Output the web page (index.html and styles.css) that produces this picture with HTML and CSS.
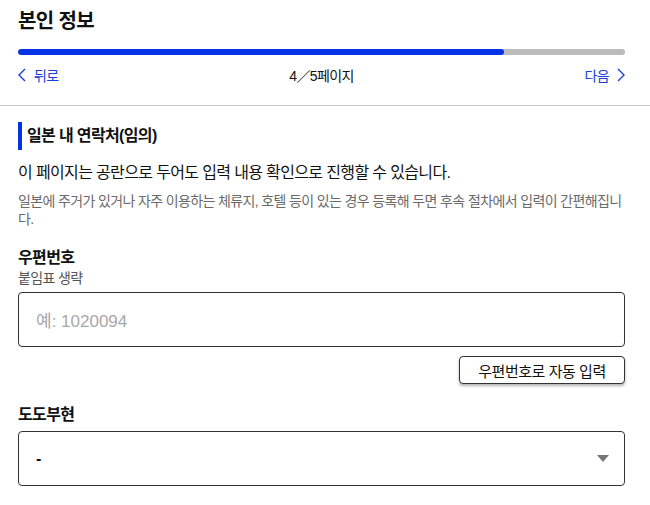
FILE: index.html
```html
<!DOCTYPE html>
<html lang="ko">
<head>
<meta charset="utf-8">
<link rel="stylesheet" href="styles.css">
</head>
<body>
<header class="header">
  <h1 class="title">본인 정보</h1>
  <div class="progress"><div class="progress-fill" style="width:80%"></div></div>
  <nav class="nav">
    <a class="nav-link"><svg class="chev" viewBox="0 0 8 14" width="8" height="14"><path d="M7 1 L1 7 L7 13" fill="none" stroke="currentColor" stroke-width="1.4"/></svg><span>뒤로</span></a>
    <span class="page">4／5페이지</span>
    <a class="nav-link"><span>다음</span><svg class="chev" viewBox="0 0 8 14" width="8" height="14"><path d="M1 1 L7 7 L1 13" fill="none" stroke="currentColor" stroke-width="1.4"/></svg></a>
  </nav>
</header>
<main class="main">
  <h2 class="section-title">일본 내 연락처(임의)</h2>
  <p class="lead">이 페이지는 공란으로 두어도 입력 내용 확인으로 진행할 수 있습니다.</p>
  <p class="note">일본에 주거가 있거나 자주 이용하는 체류지, 호텔 등이 있는 경우 등록해 두면 후속 절차에서 입력이 간편해집니다.</p>

  <div class="field">
    <div class="label">우편번호</div>
    <div class="hint">붙임표 생략</div>
    <div class="input"><span class="placeholder">예: 1020094</span></div>
    <div class="btn-row"><button class="btn">우편번호로 자동 입력</button></div>
  </div>

  <div class="field field-pref">
    <div class="label">도도부현</div>
    <div class="input select"><span class="value">-</span><span class="caret"></span></div>
  </div>
</main>
</body>
</html>
```

FILE: styles.css
```css
* { box-sizing: border-box; }
body {
  margin: 0;
  background: #fff;
  color: #111;
  font-family: "Liberation Sans", "Noto Sans CJK KR", sans-serif;
  letter-spacing: -0.04em;
}
.header {
  padding: 7px 25px 0 18px;
  border-bottom: 1px solid #c8c8c8;
}
.title {
  margin: 0;
  font-size: 20px;
  line-height: 28px;
  font-weight: 700;
}
.progress {
  margin-top: 14px;
  height: 6px;
  border-radius: 3px;
  background: #bcbcbc;
  overflow: hidden;
}
.progress-fill {
  height: 100%;
  background: #0433e6;
  border-radius: 3px;
}
.nav {
  margin-top: 10px;
  height: 20px;
  margin-bottom: 20px;
  display: flex;
  justify-content: space-between;
  align-items: center;
  font-size: 14px;
}
.nav-link {
  color: #1b3fd8;
  display: flex;
  align-items: center;
  gap: 8px;
}
.page {
  color: #111;
}
.main {
  padding: 16px 25px 0 18px;
}
.section-title {
  margin: 0;
  border-left: 4px solid #0433e6;
  padding-left: 5px;
  font-size: 16px;
  line-height: 28px;
  font-weight: 700;
}
.lead {
  margin: 11px 0 0;
  font-size: 16px;
  line-height: 24px;
}
.note {
  margin: 7px 0 0;
  font-size: 14px;
  line-height: 18px;
  color: #6a6a6a;
  letter-spacing: -0.045em;
}
.field { margin-top: 19px; }
.field-pref { margin-top: 20px; }
.label {
  font-size: 16px;
  line-height: 22px;
  font-weight: 700;
}
.hint {
  font-size: 14px;
  line-height: 18px;
  color: #555;
}
.input {
  margin-top: 5px;
  height: 55px;
  border: 1px solid #333;
  border-radius: 4px;
  display: flex;
  align-items: center;
  padding: 0 17px;
  font-size: 16px;
}
.placeholder { color: #a8a8a8; font-size: 17px; letter-spacing: 0; }
.btn-row {
  display: flex;
  justify-content: flex-end;
  margin-top: 9px;
}
.btn {
  width: 166px;
  height: 28px;
  border: 1px solid #333;
  border-radius: 4px;
  background: #fff;
  box-shadow: 0 2px 3px rgba(0,0,0,0.3);
  font-family: inherit;
  font-size: 15px;
  letter-spacing: -0.03em;
  color: #111;
  padding: 0;
}
.select { justify-content: space-between; }
.value { font-weight: 700; }
.caret {
  width: 0;
  height: 0;
  border-left: 6px solid transparent;
  border-right: 6px solid transparent;
  border-top: 7px solid #777;
  margin-right: -2px;
}
```
